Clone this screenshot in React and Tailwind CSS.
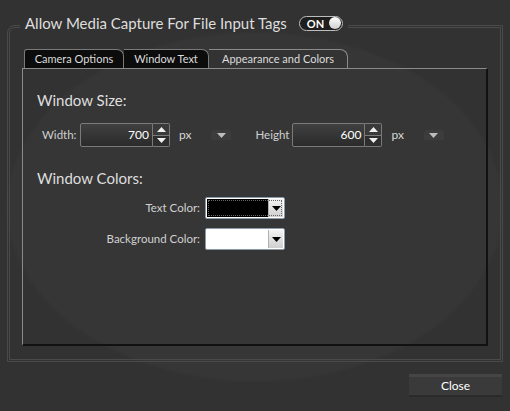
function Arrow({ up, className }) {
  return (
    <svg width="9" height="5" viewBox="0 0 9 5" className={className}>
      {up ? <path d="M0 5 L4.5 0 L9 5 Z" fill="currentColor" /> : <path d="M0 0 L9 0 L4.5 5 Z" fill="currentColor" />}
    </svg>
  );
}

function NumberField({ label, value, labelWidth }) {
  return (
    <div className="flex items-center">
      <span className={`text-[11.5px] text-[#d0d0d0] ${labelWidth}`}>{label}</span>
      <div className="flex h-[24px]">
        <div className="w-[73px] h-full border border-[#7a7a7a] rounded-l-[2px] bg-gradient-to-b from-[#404040] to-[#2b2b2b] flex items-center justify-end pr-[3px] text-[12px] text-white">
          {value}
        </div>
        <div className="w-[17px] h-full flex flex-col border border-l-0 border-[#7a7a7a] rounded-r-[2px]">
          <div className="flex-1 flex items-center justify-center bg-[#3a3a3a] border-b border-[#7a7a7a] text-[#f0f0f0]">
            <Arrow up />
          </div>
          <div className="flex-1 flex items-center justify-center bg-[#2e2e2e] text-[#f0f0f0]">
            <Arrow />
          </div>
        </div>
      </div>
      <span className="ml-[9px] text-[12px] text-[#d8d8d8]">px</span>
      <div className="ml-[20px] w-[20px] h-[10px] rounded-t-[3px] bg-[#3c3c3c] flex items-center justify-center text-[#bdbdbd]">
        <Arrow />
      </div>
    </div>
  );
}

function ColorRow({ label, color, focused }) {
  return (
    <div className="flex items-center h-[22px]">
      <span className="w-[163px] text-right text-[11.5px] text-[#d0d0d0]">{label}</span>
      <div className="ml-[5px] w-[80px] h-full border border-[#8a9aaa] rounded-[2px] bg-white flex p-[1px] relative">
        <div className={`flex-1 ${color}`}></div>
        <div className="w-[15px] bg-gradient-to-b from-[#f4f4f4] to-[#cfcfcf] border-l border-[#b0b0b0] flex items-center justify-center text-black">
          <Arrow />
        </div>
        {focused && <div className="absolute inset-[2px] border border-dotted border-[#666]"></div>}
      </div>
    </div>
  );
}

export default function App() {
  return (
    <div className="w-[510px] h-[411px] overflow-hidden flex flex-col bg-[#323232] bg-[radial-gradient(ellipse_250px_176px_at_255px_207px,#363636_98%,#323232_100%)] text-[#dcdcdc] font-[Lato,sans-serif]">
      <fieldset className="mx-[7px] mt-[13px] border-[3px] border-double border-[#4a4a4a] rounded-tl-[8px] px-[12px] pb-[13px]">
        <legend className="ml-[-2px] px-[5px]">
          <span className="flex items-center gap-[12px] pb-[6px]">
            <span className="text-[15px] leading-[20px] text-[#dedede]">Allow Media Capture For File Input Tags</span>
            <span className="w-[44px] h-[15px] rounded-full border border-[#bdbdbd] bg-[#1e1e1e] flex items-center justify-between pl-[7px] pr-[1px]">
              <span className="text-[11px] font-bold text-white leading-none">ON</span>
              <span className="w-[12px] h-[12px] rounded-full bg-gradient-to-b from-white to-[#cfcfcf]"></span>
            </span>
          </span>
        </legend>

        <div className="flex items-end h-[19px] mt-[10px] pl-[2px]">
          <div className="w-[100px] h-full bg-[#0c0c0c] border border-b-0 border-[#7a7a7a] rounded-tl-[3px] rounded-tr-[7px] flex items-center justify-center text-[11px] text-[#dcdcdc]">
            Camera Options
          </div>
          <div className="w-[85px] h-full bg-[#0c0c0c] border border-b-0 border-l-0 border-[#7a7a7a] rounded-tr-[7px] flex items-center justify-center text-[11px] text-[#dcdcdc]">
            Window Text
          </div>
          <div className="w-[139px] h-full bg-[#333333] border border-b-0 border-l-0 border-[#8a8a8a] rounded-tr-[8px] flex items-center justify-center text-[11px] text-[#dcdcdc]">
            Appearance and Colors
          </div>
        </div>

        <div className="h-[278px] border-l border-t border-[#8a8a8a] border-r-2 border-b-2 border-r-[#111] border-b-[#111] pl-[14px] pt-[21px]">
          <div className="text-[15px] leading-[20px] text-[#dedede]">Window Size:</div>
          <div className="flex items-center mt-[13px]">
            <NumberField label="Width:" value="700" labelWidth="ml-[5px] w-[38px]" />
            <div className="ml-[24px]">
              <NumberField label="Height" value="600" labelWidth="w-[37px]" />
            </div>
          </div>
          <div className="text-[15px] leading-[20px] text-[#dedede] mt-[21px]">Window Colors:</div>
          <div className="flex flex-col gap-[9px] mt-[9px]">
            <ColorRow label="Text Color:" color="bg-black" focused />
            <ColorRow label="Background Color:" color="bg-white" />
          </div>
        </div>
      </fieldset>

      <div className="flex justify-end mt-[12px] pr-[8px]">
        <button className="w-[93px] h-[23px] flex flex-col text-[12px] text-white">
          <span className="h-[5px] bg-[#454545]"></span>
          <span className="flex-1 bg-[#3a3a3a] flex items-center justify-center">Close</span>
          <span className="h-[3px] bg-[#2a2a2a]"></span>
        </button>
      </div>
    </div>
  );
}
